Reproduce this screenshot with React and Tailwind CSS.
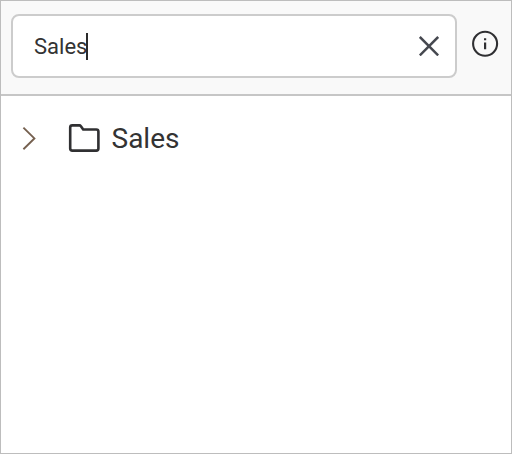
function CloseIcon() {
  return (
    <svg width="20" height="20" viewBox="0 0 20 20" fill="none" stroke="#45484f" strokeWidth="2.5">
      <path d="M0.8 1 19.2 19.4M19.2 1 0.8 19.4" />
    </svg>
  );
}

function InfoIcon() {
  return (
    <svg width="28" height="28" viewBox="0 0 28 28" fill="none">
      <circle cx="14.1" cy="13.8" r="12" stroke="#2f2f32" strokeWidth="2.1" />
      <path d="M14.1 12.4v6.8M14.1 8.2v2.1" stroke="#2f2f32" strokeWidth="2.2" />
    </svg>
  );
}

function ChevronIcon() {
  return (
    <svg width="14" height="24" viewBox="0 0 14 24" fill="none" stroke="#75604f" strokeWidth="1.9">
      <path d="M1.4 1.6 12.4 12.4 1.4 23.2" />
    </svg>
  );
}

function FolderIcon() {
  return (
    <svg width="32" height="30" viewBox="0 0 32 30" fill="none" stroke="#303032" strokeWidth="2.6" strokeLinejoin="round">
      <path d="M4.3 2.4H11.4Q12.3 2.4 12.9 3.2L15.2 6.5H28.3Q30.4 6.5 30.4 8.6V25.5Q30.4 27.6 28.3 27.6H4.3Q2.2 27.6 2.2 25.5V4.5Q2.2 2.4 4.3 2.4Z" />
    </svg>
  );
}

export default function App() {
  return (
    <div className="flex h-[454px] w-[512px] flex-col border border-[#bdbdbd] bg-white font-['Roboto',sans-serif] text-[#333333]">
      <header className="flex h-[95px] shrink-0 items-start border-b-2 border-[#c6c6c6] bg-[#f9f9f9] pt-[13px] pl-[10px]">
        <div className="flex h-16 w-[446px] items-center rounded-lg border-2 border-[#cccccc] bg-white pr-4 pl-[21px]">
          <span className="pt-0.5 text-[22px] leading-7">Sales</span>
          <span className="-ml-px h-[27px] w-0.5 bg-[#2b2b2b]" />
          <button className="ml-auto" aria-label="Clear">
            <CloseIcon />
          </button>
        </div>
        <button className="mt-4 ml-[14px]" aria-label="Information">
          <InfoIcon />
        </button>
      </header>
      <main className="flex h-[84px] items-center pl-[21px]">
        <ChevronIcon />
        <span className="ml-8">
          <FolderIcon />
        </span>
        <span className="ml-[11.5px] pt-0.5 text-[28px] leading-8">Sales</span>
      </main>
    </div>
  );
}
